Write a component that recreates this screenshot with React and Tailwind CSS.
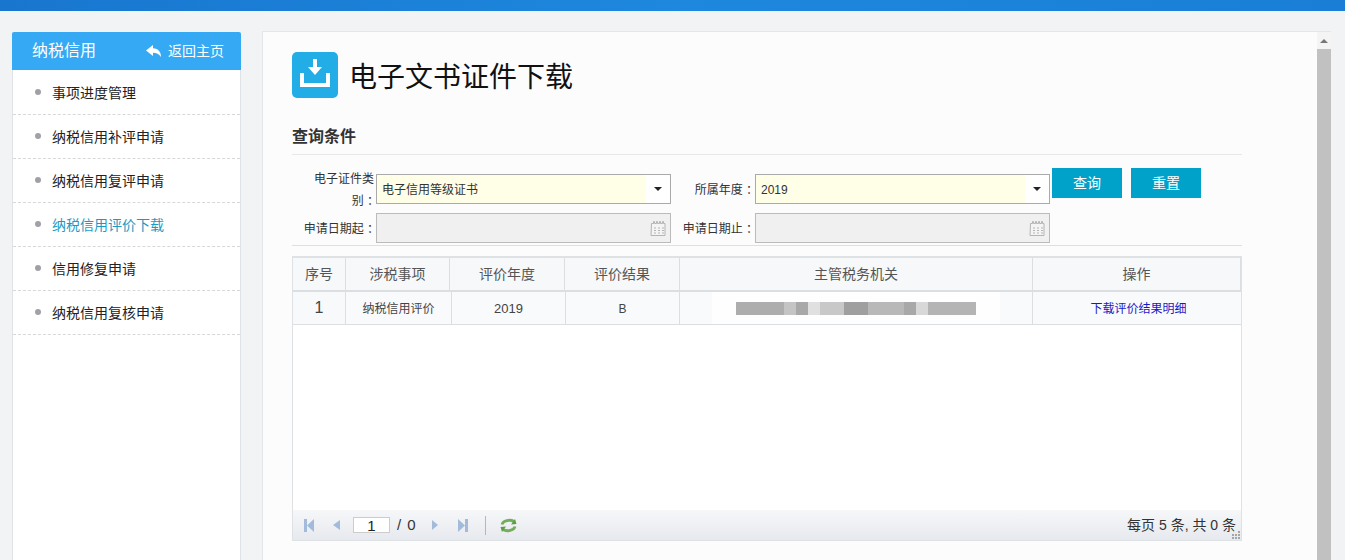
const FONT = '"Liberation Sans","Noto Sans CJK SC",sans-serif';
const menu = ['事项进度管理','纳税信用补评申请','纳税信用复评申请','纳税信用评价下载','信用修复申请','纳税信用复核申请'];
const blur = [['#adadad',48],['#c4c4c4',12],['#a8a8a8',12],['#e0e0e0',12],['#c8c8c8',24],['#9f9f9f',24],['#b8b8b8',36],['#a8a8a8',12],['#d8d8d8',12],['#b4b4b4',48]];
function Cal(){return(
 <svg width="17" height="17" viewBox="0 0 17 17" fill="none" stroke="#b4b4b4">
  <path d="M1.500 3.500h2v-2h1v2h2v-2h1v2h2v-2h1v2h2v-2h1v2h1.500v12h-14z" fill="#f4f4f4"/>
  <path d="M4 8h2M8 8h2M12 8h2M4 10.500h2M8 10.500h2M12 10.500h2M4 13h2M8 13h2M12 13h2" strokeWidth="1.200"/>
 </svg>)}
function Select({value}){return(
 <div className="w-[295px] h-[30px] shrink-0 border border-[#aaa] bg-white flex items-center justify-between">
  <div className="h-full w-[269px] flex items-center pl-[5px] pt-px bg-[#ffffe8] text-[12px] text-[#333]">{value}</div>
  <div className="pr-[8px] flex"><span className="w-0 h-0 border-x-[4px] border-x-transparent border-t-[4px] border-t-[#222]"/></div>
 </div>)}
function DateBox(){return(
 <div className="w-[295px] h-[30px] shrink-0 border border-[#bbb] bg-[#f0f0f0] flex items-center justify-end pr-[3px] pt-[1px]"><Cal/></div>)}
function Label({children,first}){return(
 <div className="w-[84px] shrink-0 pt-px text-[12px] text-[#333] text-right leading-[22px]">
  {first&&<div className="pr-[2px]">{first}</div>}
  <div className="-mr-[3px]">{children}{'\u00a0：'}</div>
 </div>)}
const cols=[['序号','w-[53px]'],['涉税事项','w-[104px]'],['评价年度','w-[115px]'],['评价结果','w-[115px]'],['主管税务机关','w-[353px]'],['操作','w-[208px]']];
const cols2=['w-[53px]','w-[106px]','w-[114px]','w-[114px]','w-[353px]','w-[208px]'];
function Pager(){return(
 <div className="h-[30px] shrink-0 bg-gradient-to-b from-[#f6f7f9] to-[#e6e9ee] flex items-center pl-[11px] relative">
  <svg width="10" height="13" viewBox="0 0 10 13"><rect x="0" y="0" width="3" height="13" fill="#a3bbdb"/><path d="M10 0v13L3 6.500z" fill="#a3bbdb"/></svg>
  <svg className="ml-[19px]" width="7" height="10" viewBox="0 0 7 10"><path d="M7 0v10L0 5z" fill="#a3bbdb"/></svg>
  <div className="ml-[13px] w-[37px] h-[16px] border border-[#ccc] bg-white text-center text-[15px] leading-[15px] text-[#222]">1</div>
  <span className="ml-[7px] text-[15px] text-[#333] tracking-[1px]">/ 0</span>
  <svg className="ml-[15px]" width="6" height="10" viewBox="0 0 6 10"><path d="M0 0v10l6-5z" fill="#a3bbdb"/></svg>
  <svg className="ml-[20px]" width="10" height="13" viewBox="0 0 10 13"><path d="M0 0v13l7-6.500z" fill="#a3bbdb"/><rect x="7" y="0" width="3" height="13" fill="#a3bbdb"/></svg>
  <div className="ml-[17px] w-px h-[19px] bg-[#b4b8be]"/>
  <svg className="ml-[14px]" width="17" height="15" viewBox="0 0 17 15" fill="none" stroke="#74ad5c" strokeWidth="2.800"><path d="M2 6.500c1-4 8-5.500 12-3"/><path d="M15 8.500c-1 4-8 5.500-12 3"/><path d="M11 6.500l5.500-.5-1.500-5z" fill="#5d9e48" stroke="none"/><path d="M6 8.500l-5.500.5 1.500 5z" fill="#5d9e48" stroke="none"/></svg>
  <span className="ml-auto mr-[5px] text-[14px] text-[#333]">每页 5 条, 共 0 条</span>
  <div className="absolute right-[1px] bottom-[1px] grid grid-cols-3 gap-[1px]">
   {[0,1,2,3,4,5,6,7,8].map(i=><span key={i} className={`w-[2px] h-[2px] ${i===0||i===1?'bg-transparent':'bg-[#a5a5a5]'}`}/>)}
  </div>
 </div>)}
export default function App(){return(
 <div className="w-[1345px] h-[560px] overflow-hidden bg-[#f1f3f5] flex flex-col" style={{fontFamily:FONT}}>
  <div className="h-[11px] shrink-0 bg-gradient-to-r from-[#1976cf] via-[#1e88de] to-[#1a7ed6]"/>
  <div className="h-[570px] shrink-0 flex pl-[12px] pt-[20px]">
   <aside className="w-[229px] shrink-0 bg-white border border-t-0 border-[#dfe3e8] self-stretch rounded-t-[2px] mt-[1px]">
    <div className="h-[38px] -mx-px bg-[#36a9f4] rounded-t-[2px] flex items-center justify-between pl-[20px] pr-[17px] text-white">
     <span className="text-[16px]">纳税信用</span>
     <span className="flex items-center text-[14px]">
      <svg width="15" height="13" viewBox="0 0 15 13" fill="#fff" className="mr-[7px]"><path d="M7 0 0 5.500 7 11V7.800c3.500 0 5.800 1 8 4.200 0-5-2.500-8.500-8-8.800z"/></svg>
      返回主页
     </span>
    </div>
    <ul className="pt-px">
     {menu.map((m,i)=>(
      <li key={m} className={`h-[44px] border-b border-dashed border-[#d8d8d8] flex items-center pl-[22px] pt-px text-[14px] ${i===3?'text-[#1a9bc4]':'text-[#222]'}`}>
       <span className="w-[6px] h-[6px] rounded-full bg-[#a0a0a8] mr-[11px] -mt-[3px]"/>{m}
      </li>))}
    </ul>
   </aside>
   <main className="ml-[21px] w-[1069px] shrink-0 bg-[#fcfcfd] border border-[#e4e7ea] flex">
    <div className="w-[1054px] pl-[29px] pt-[20px] shrink-0">
     <div className="flex items-center h-[46px]">
      <div className="w-[46px] h-[46px] rounded-[5px] bg-[#22ade6] flex">
       <svg width="46" height="46" viewBox="0 0 46 46" fill="#fff"><path d="M21 7h4v8h5l-7 8-7-8h5z"/><path d="M8 21h4v10h22V21h4v14H8z"/></svg>
      </div>
      <h1 className="ml-[11px] pt-[5px] text-[28px] leading-none text-[#111]">电子文书证件下载</h1>
     </div>
     <div className="w-[950px] mt-[28px] h-[28px] text-[16px] font-bold text-[#333] leading-[22px]">查询条件</div>
     <div className="w-[950px] h-px bg-[#e6e8ea]"/>
     <div className="w-[950px] h-[91px] border-b border-[#dddfe2] flex flex-col gap-[9px] pt-[19px] relative">
      <div className="flex items-center h-[30px]">
       <Label first="电子证件类">别</Label>
       <Select value="电子信用等级证书"/>
       <Label>所属年度</Label>
       <Select value="2019"/>
      </div>
      <div className="flex items-center h-[30px]">
       <Label>申请日期起</Label>
       <DateBox/>
       <Label>申请日期止</Label>
       <DateBox/>
      </div>
      <div className="absolute left-[760px] top-[13px] flex gap-[9px]">
       <button className="w-[70px] h-[30px] bg-[#00a2ca] text-white text-[14px]">查询</button>
       <button className="w-[70px] h-[30px] bg-[#00a2ca] text-white text-[14px]">重置</button>
      </div>
     </div>
     <div className="w-[950px] h-[285px] mt-[10px] bg-white border border-[#dfe2e5] border-t-[2px] flex flex-col">
      <div className="h-[34px] flex bg-[#f6f8fa] border-b-[2px] border-[#dcdfe2] shrink-0">
       {cols.map(([t,w])=><div key={t} className={`${w} shrink-0 border-r border-[#dcdfe2] flex items-center justify-center text-[14px] text-[#555]`}>{t}</div>)}
      </div>
      <div className="h-[33px] flex border-b border-[#dcdfe2] shrink-0 text-[12px] text-[#444]">
       <div className={`${cols2[0]} shrink-0 bg-[#f8f9fa] border-r border-[#dcdfe2] flex items-center justify-center text-[16px]`}>1</div>
       <div className={`${cols2[1]} shrink-0 bg-[#f9fafb] border-r border-[#dcdfe2] flex items-center justify-center pt-px`}>纳税信用评价</div>
       <div className={`${cols2[2]} shrink-0 bg-[#f9fafb] border-r border-[#dcdfe2] flex items-center justify-center text-[13px] pt-px`}>2019</div>
       <div className={`${cols2[3]} shrink-0 bg-[#f9fafb] border-r border-[#dcdfe2] flex items-center justify-center pt-px`}>B</div>
       <div className={`${cols2[4]} shrink-0 bg-[#f9fafb] border-r border-[#dcdfe2] flex items-center justify-center`}>
        <div className="w-[288px] h-full bg-[#fefefe] flex items-center justify-center">
         <div className="flex h-[13px]">{blur.map(([c,w],i)=><span key={i} style={{background:c,width:w}} className="h-full"/>)}</div>
        </div>
       </div>
       <div className="flex-1 bg-[#f9fafb] flex items-center justify-center pt-px pl-[3px] text-[#1a1ac4]">下载评价结果明细</div>
      </div>
      <div className="flex-1 bg-white"/>
      <Pager/>
     </div>
    </div>
    <div className="w-[14px] shrink-0 bg-[#f4f4f4] flex flex-col">
     <div className="h-[17px] flex items-center justify-center shrink-0"><span className="w-0 h-0 border-x-[4px] border-x-transparent border-b-[4px] border-b-[#777]"/></div>
     <div className="flex-1 bg-[#c1c1c1]"/>
    </div>
   </main>
  </div>
 </div>)}
